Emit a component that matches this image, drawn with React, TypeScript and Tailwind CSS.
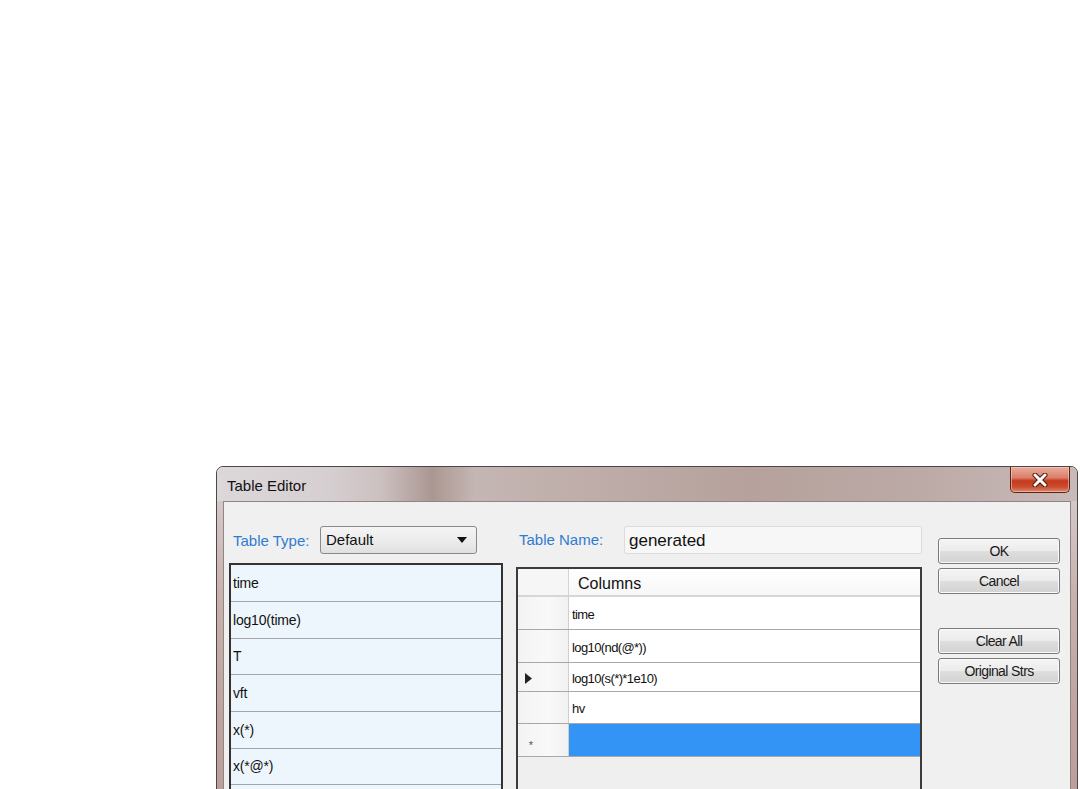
import React from 'react';

const leftItems = ['time', 'log10(time)', 'T', 'vft', 'x(*)', 'x(*@*)', ''];

const gridRows = [
  { text: 'time', h: 'h-[33px]', mark: '' },
  { text: 'log10(nd(@*))', h: 'h-[33px]', mark: '' },
  { text: 'log10(s(*)*1e10)', h: 'h-[29px]', mark: 'arrow' },
  { text: 'hv', h: 'h-[32px]', mark: '' },
  { text: '', h: 'h-[33px]', mark: 'star' },
];

const WinButton = ({ label, className }: { label: string; className?: string }) => (
  <button
    className={
      'h-[26px] w-full rounded-[3px] border border-[#7a7a7a] bg-[linear-gradient(180deg,#f4f4f4_0%,#ececec_48%,#dedede_52%,#d2d2d2_100%)] text-[14px] tracking-[-0.6px] text-[#1a1a1a] shadow-[inset_0_0_0_1px_#fbfbfb] ' +
      (className ?? '')
    }
  >
    {label}
  </button>
);

const App = () => {
  return (
    <div
      className="w-[1080px] h-[789px] overflow-hidden bg-white pt-[466px] pl-[216px]"
      style={{ fontFamily: '"Liberation Sans", Arial, sans-serif' }}
    >
      <div className="w-[862px] h-[360px] flex flex-col rounded-t-[7px] border border-[#4d4646] bg-[linear-gradient(180deg,#d8d0d2_0%,#c8b2ae_35%,#bfa39e_70%,#bb9d98_100%)]">
        {/* title bar */}
        <div className="h-[39px] flex items-start rounded-t-[6px] bg-[linear-gradient(90deg,#dcd7da_0%,#d7d0d2_12%,#ccc1c1_19%,#ab9792_25%,#c4b6b3_30%,#bfaeaa_42%,#b6a19c_62%,#bcaaa6_82%,#c8bab8_100%)]">
          <div className="flex-1 self-center pl-[10px] pt-[4px] text-[15px] text-[#111]">Table Editor</div>
          <div className="mr-[7px] flex h-[26px] w-[60px] items-center justify-center rounded-b-[5px] border border-t-0 border-[#5e2118] bg-[linear-gradient(180deg,#e9ab9c_0%,#dc806b_42%,#c3391d_56%,#cc4e30_80%,#dc8a6e_100%)] shadow-[inset_0_0_0_1px_rgba(255,220,210,0.5)]">
            <svg width="18" height="14" viewBox="0 0 18 14">
              <path d="M4 2 L14 12 M14 2 L4 12" stroke="#4a1a12" strokeWidth="5" strokeLinecap="round" />
              <path d="M4 2 L14 12 M14 2 L4 12" stroke="#ffffff" strokeWidth="3" strokeLinecap="round" />
            </svg>
          </div>
        </div>

        {/* client area */}
        <div className="flex-1 flex px-[6px]">
          <div className="flex-1 flex border border-[#8f8585] bg-[#f0f0f0] pt-[24px]">
            {/* left column */}
            <div className="ml-[5px] w-[274px] flex flex-col">
              <div className="h-[28px] flex items-center">
                <span className="w-[91px] pl-[4px] pt-[2px] text-[15px] text-[#2f7bd0]">Table Type:</span>
                <div className="h-[28px] w-[157px] flex items-center justify-between rounded-[3px] border border-[#8a8a8a] bg-[linear-gradient(180deg,#f5f5f5_0%,#ececec_50%,#e0e0e0_100%)] pl-[5px] pr-[9px]">
                  <span className="pt-[1px] text-[15px] text-[#111]">Default</span>
                  <svg width="10" height="6" viewBox="0 0 10 6">
                    <path d="M0 0 L10 0 L5 6 Z" fill="#111" />
                  </svg>
                </div>
              </div>
              <div className="mt-[9px] flex-1 border-2 border-[#333] bg-[#eef6fd]">
                {leftItems.map((item, i) => (
                  <div
                    key={i}
                    className="h-[36.7px] flex items-center border-b border-[#a6a6a6] pl-[2px] pt-[1px] text-[14px] tracking-[-0.2px] text-[#111]"
                  >
                    {item}
                  </div>
                ))}
              </div>
            </div>

            {/* middle column */}
            <div className="ml-[13px] w-[406px] flex flex-col">
              <div className="h-[28px] flex items-center">
                <span className="w-[108px] pl-[3px] text-[15px] text-[#2f7bd0]">Table Name:</span>
                <div className="h-[28px] w-[298px] flex items-center rounded-[2px] border border-[#dcdcdc] bg-[#f7f7f7] pl-[4px] pt-[2px] text-[17px] text-[#111]">
                  generated
                </div>
              </div>
              <div className="mt-[13px] flex-1 border-2 border-[#3c3c3c] bg-[#efefef]">
                <div className="h-[28px] flex border-b-2 border-[#d6d6d6]">
                  <div className="w-[51px] border-r border-[#d4d4d4] bg-[#f6f6f6]" />
                  <div className="flex-1 flex items-center bg-[linear-gradient(180deg,#ffffff_0%,#f7f7f7_100%)] pl-[9px] pt-[4px] text-[16px] text-[#111]">
                    Columns
                  </div>
                </div>
                {gridRows.map((row, i) => (
                  <div key={i} className={'flex border-b border-[#a8a8a8] ' + row.h}>
                    <div className="w-[51px] flex items-center justify-center border-r border-[#cfcfcf] bg-[linear-gradient(90deg,#f3f3f3_0%,#f9f9f9_60%,#f1f1f1_100%)]">
                      {row.mark === 'arrow' && (
                        <svg width="7" height="11" viewBox="0 0 7 11" className="mr-[30px] mt-[2px]">
                          <path d="M0 0 L7 5.5 L0 11 Z" fill="#222" />
                        </svg>
                      )}
                      {row.mark === 'star' && (
                        <span className="mr-[24px] mt-[10px] text-[11px] text-[#555]">*</span>
                      )}
                    </div>
                    <div
                      className={
                        'flex-1 flex items-center pl-[3px] pt-[3px] text-[13px] tracking-[-0.6px] text-[#111] ' +
                        (row.mark === 'star' ? 'bg-[#3394f6]' : 'bg-white')
                      }
                    >
                      {row.text}
                    </div>
                  </div>
                ))}
              </div>
            </div>

            {/* buttons */}
            <div className="ml-[16px] w-[122px] flex flex-col">
              <WinButton label="OK" className="mt-[12px]" />
              <WinButton label="Cancel" className="mt-[4px]" />
              <WinButton label="Clear All" className="mt-[34px]" />
              <WinButton label="Original Strs" className="mt-[4px]" />
            </div>
          </div>
        </div>
      </div>
    </div>
  );
};

export default App;
